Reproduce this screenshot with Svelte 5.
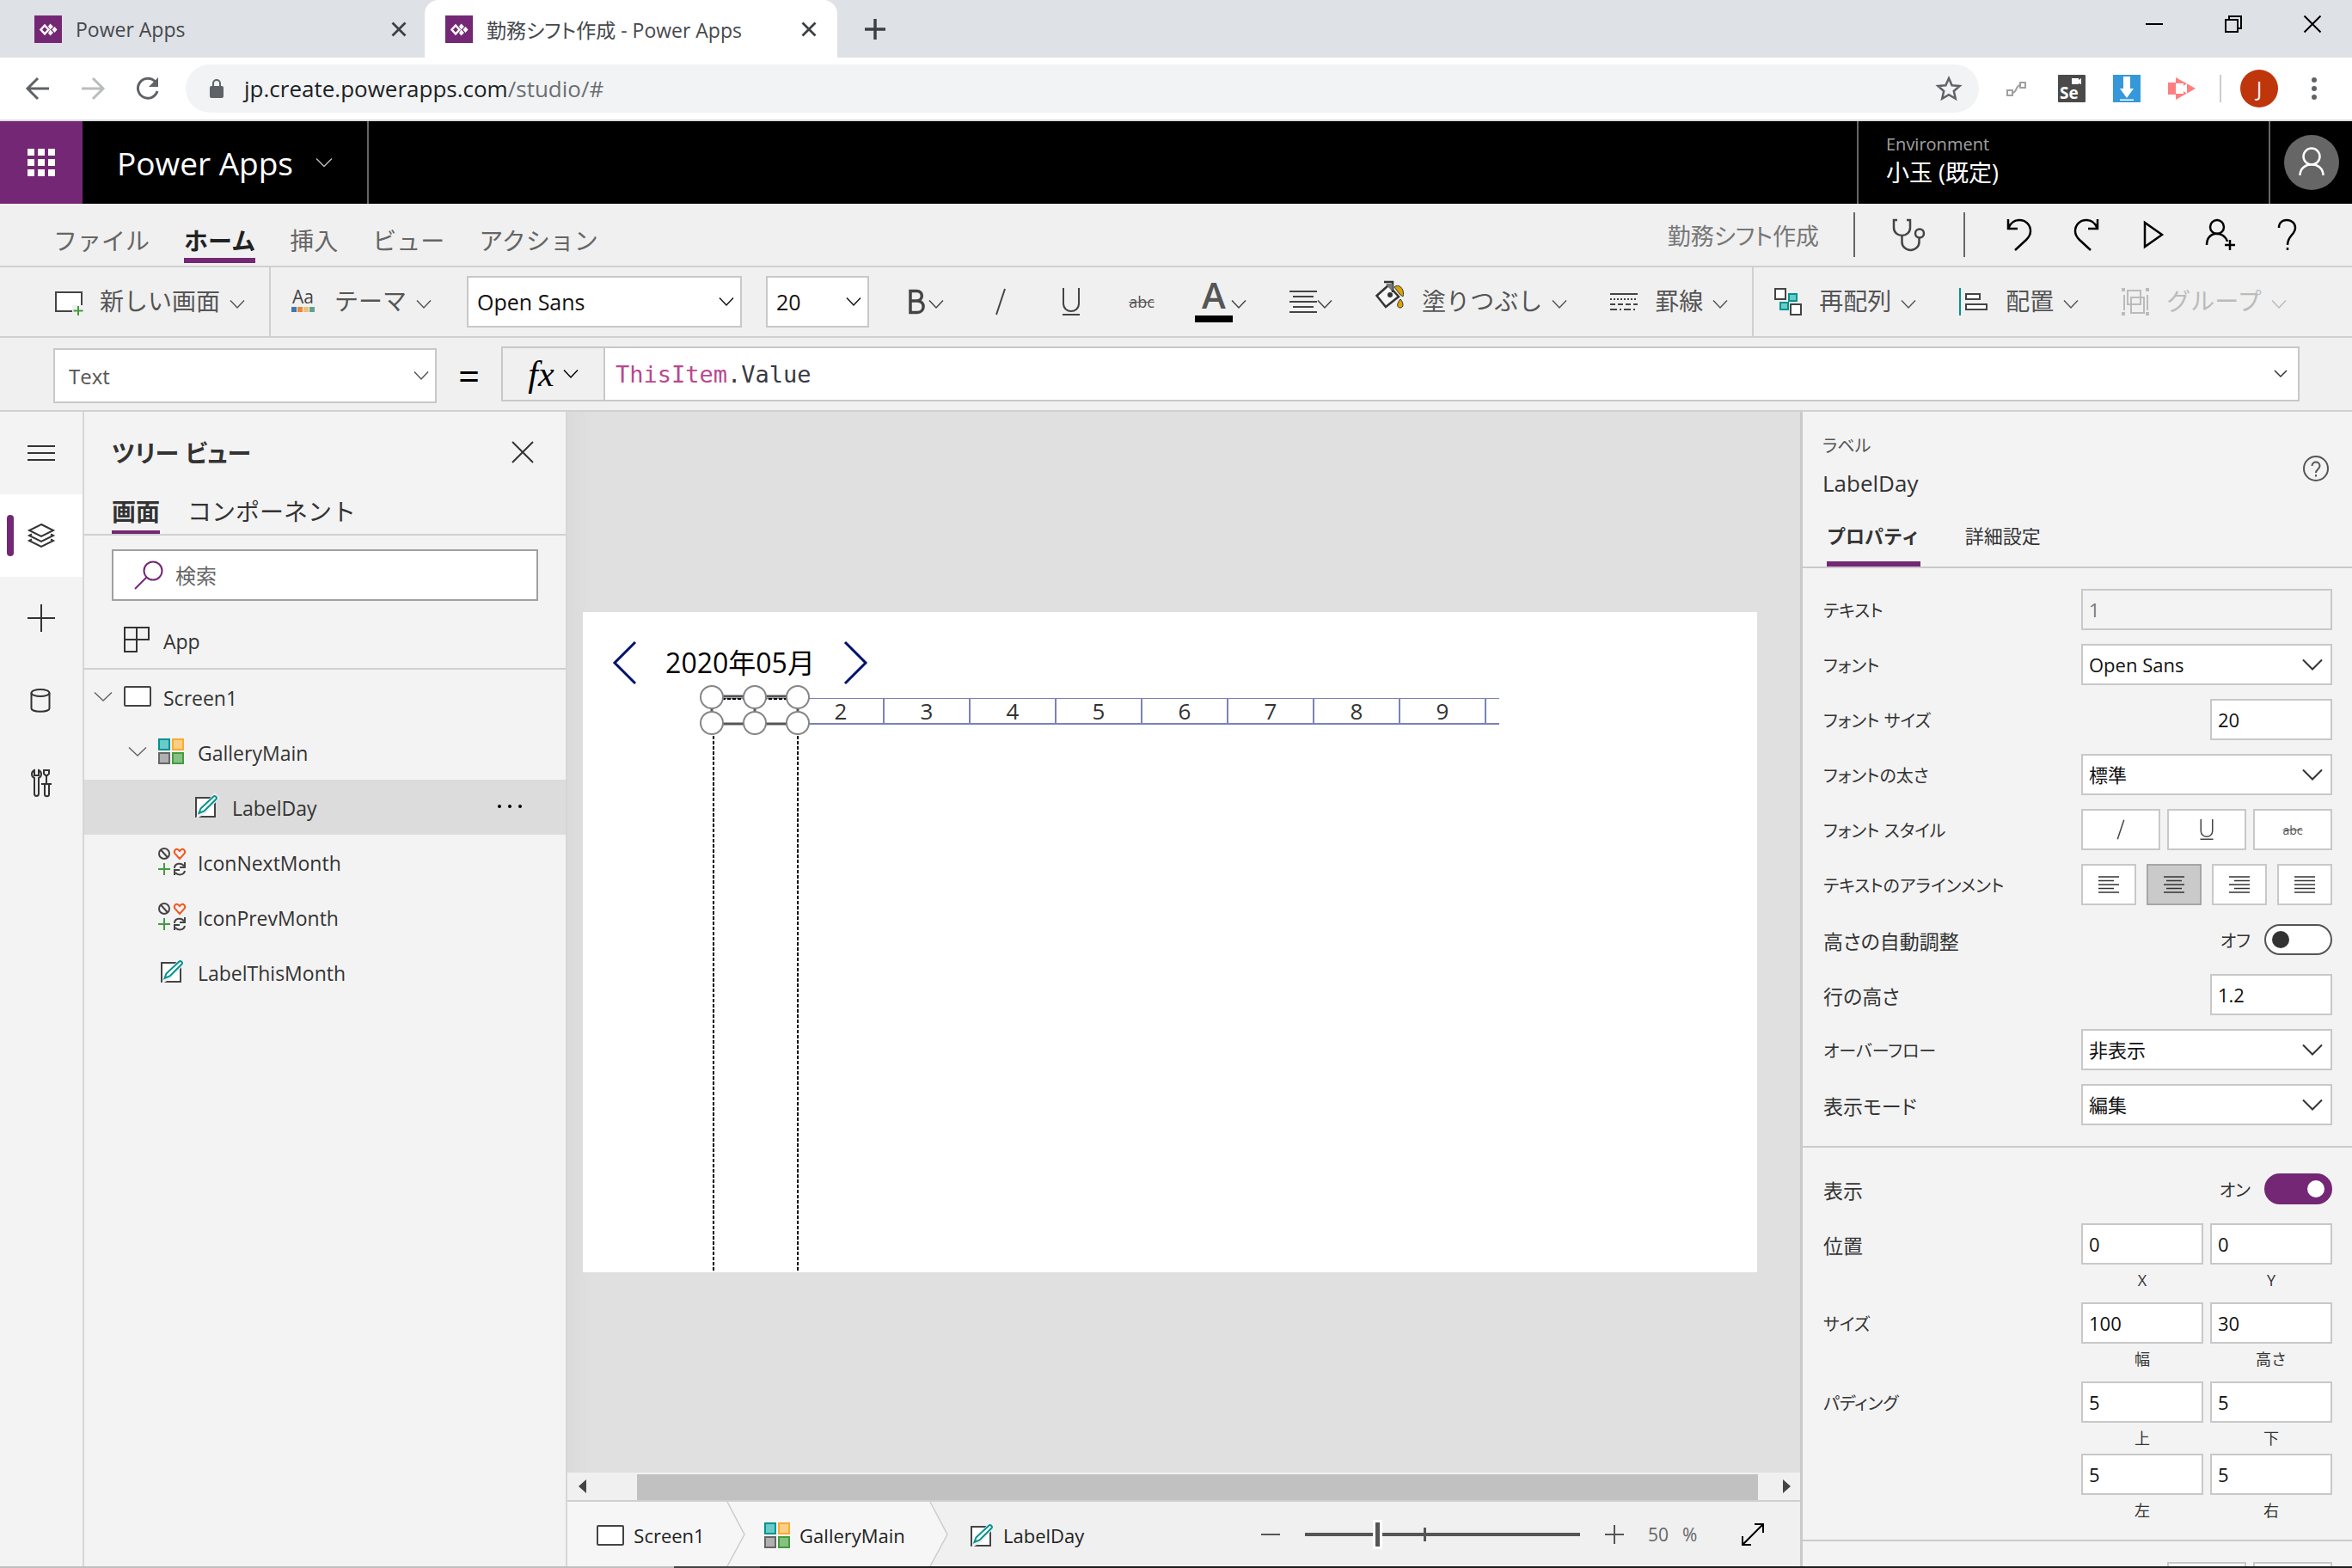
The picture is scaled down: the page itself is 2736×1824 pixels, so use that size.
<script>
  const menus = ['ファイル', 'ホーム', '挿入', 'ビュー', 'アクション'];
  const days = [1, 2, 3, 4, 5, 6, 7, 8, 9];
  const handles = [0, 50, 100];
  const treeItems = [
    { name: 'Screen1', icon: 'screen', level: 0, open: true },
    { name: 'GalleryMain', icon: 'gallery', level: 1, open: true },
    { name: 'LabelDay', icon: 'label', level: 2, selected: true },
    { name: 'IconNextMonth', icon: 'icons', level: 1 },
    { name: 'IconPrevMonth', icon: 'icons', level: 1 },
    { name: 'LabelThisMonth', icon: 'label', level: 1 }
  ];
  const aligns = [
    { name: '左揃え', rows: [[0, 24], [0, 18], [0, 24], [0, 18], [0, 24]] },
    { name: '中央揃え', rows: [[0, 24], [3, 21], [0, 24], [3, 21], [0, 24]], on: true },
    { name: '右揃え', rows: [[0, 24], [6, 24], [0, 24], [6, 24], [0, 24]] },
    { name: '両端揃え', rows: [[0, 24], [0, 24], [0, 24], [0, 24], [0, 24]] }
  ];
</script>

{#snippet chevron()}
  <svg class="chev" width="18" height="12" viewBox="0 0 18 12"><path d="M1 1.500l8 8.500 8-8.500" /></svg>
{/snippet}

{#snippet bigChevron()}
  <svg class="chev big" width="24" height="15" viewBox="0 0 24 15"><path d="M1 1.500l11 11 11-11" /></svg>
{/snippet}

{#snippet favicon()}
  <svg width="32" height="32" viewBox="0 0 32 32">
    <rect width="32" height="32" fill="#742774" />
    <path d="M12 11.500l4.500 5-4.500 5-4.500-5z" fill="none" stroke="#fff" stroke-width="2.500" />
    <path d="M18.500 9.500l3.500 3.500-3.500 3.500-2.500-4zM18.500 16.500l3.500 3.500-3.500 3.500-2.500-3zM23.500 13l3 3.500-3 3.500-3-3.500z" fill="#fff" />
  </svg>
{/snippet}

{#snippet tabClose()}
  <svg width="18" height="18" viewBox="0 0 18 18"><path d="M1.500 1.500l15 15M16.500 1.500l-15 15" stroke="#3c4043" stroke-width="2.800" /></svg>
{/snippet}

{#snippet screenIcon()}
  <svg width="32" height="24" viewBox="0 0 32 24"><rect x="1" y="1" width="30" height="22" rx="1" fill="#fff" stroke="#444" stroke-width="2" /></svg>
{/snippet}

{#snippet galleryIcon()}
  <svg width="30" height="30" viewBox="0 0 30 30" stroke-width="2">
    <rect x="1" y="1" width="12" height="12" fill="#69cccb" stroke="#009390" />
    <rect x="17" y="1" width="12" height="12" fill="#fccf84" stroke="#fbaa33" />
    <rect x="1" y="17" width="12" height="12" fill="#b0b0b0" stroke="#666" />
    <rect x="17" y="17" width="12" height="12" fill="#86c184" stroke="#429c3e" />
  </svg>
{/snippet}

{#snippet labelIcon()}
  <svg width="28" height="28" viewBox="0 0 28 28">
    <rect x="2" y="4" width="22" height="22" fill="#fff" stroke="#444" stroke-width="2" />
    <path d="M24 .500l3.500 3.500-15 17-8 4.500 2-7z" fill="#f0f0f0" stroke="#f0f0f0" stroke-width="3" />
    <path d="M22.500 2.500c1.500-1.500 4.500 1 3 3L11.500 19.500 5.500 22l2-5.500z" fill="#fff" stroke="#009390" stroke-width="2" />
  </svg>
{/snippet}

{#snippet iconsIcon()}
  <svg width="32" height="32" viewBox="0 0 32 32" fill="none" stroke-width="2">
    <circle cx="7" cy="7" r="6" stroke="#444" /><path d="M3 2.500l8 9" stroke="#444" />
    <path d="M25 13l-5.500-6c-2-3 1-6.500 4-4.500l1.500 1.500 1.500-1.500c3-2 6 1.500 4 4.500z" stroke="#f2571f" />
    <path d="M7 18v14M0 25h14" stroke="#429c3e" />
    <path d="M19 24c0-6 8-7 11-2.500M31 17v6h-6M31 27c-1 5-8 6-11 2M19 32v-6h6" stroke="#444" />
  </svg>
{/snippet}

{#snippet objectIcon(kind)}
  {#if kind === 'screen'}{@render screenIcon()}
  {:else if kind === 'gallery'}{@render galleryIcon()}
  {:else if kind === 'label'}{@render labelIcon()}
  {:else}{@render iconsIcon()}{/if}
{/snippet}

{#snippet italicIcon()}
  <svg width="32" height="32" viewBox="0 0 32 32"><path d="M21 1L11 31" stroke="#444" stroke-width="2" /></svg>
{/snippet}

{#snippet underlineIcon()}
  <svg width="32" height="32" viewBox="0 0 32 32" fill="none" stroke="#444" stroke-width="2"><path d="M7 0v18c0 12 18 12 18 0V0M6 31h20" /></svg>
{/snippet}

{#snippet numberField(id, value, label)}
  <span class="num">
    <input {id} type="text" {value} />
    <label for={id}>{label}</label>
  </span>
{/snippet}

{#snippet selectRow(id, label, value, kana)}
  <div class="prop">
    <label for={id} class:kana>{label}</label>
    <span class="select wide"><select {id}><option>{value}</option></select>{@render bigChevron()}</span>
  </div>
{/snippet}

<div class="window">
  <header class="tabstrip">
    <div class="btab">{@render favicon()}<span>Power Apps</span><button aria-label="閉じる">{@render tabClose()}</button></div>
    <div class="btab active">{@render favicon()}<span>勤務シフト作成 - Power Apps</span><button aria-label="閉じる">{@render tabClose()}</button></div>
    <button class="newtab" aria-label="新しいタブ"><svg width="26" height="26" viewBox="0 0 26 26"><path d="M13 1v24M1 13h24" stroke="#3c4043" stroke-width="3.500" /></svg></button>
    <div class="winbtns">
      <button aria-label="最小化"><svg width="20" height="20" viewBox="0 0 20 20"><path d="M0 10h20" /></svg></button>
      <button aria-label="元に戻す"><svg width="20" height="20" viewBox="0 0 20 20"><path d="M1 5h14v14H1zM5 5V1h14v14h-4" /></svg></button>
      <button aria-label="ウィンドウを閉じる"><svg width="20" height="20" viewBox="0 0 20 20"><path d="M.500 .500l19 19M19.500 .500l-19 19" /></svg></button>
    </div>
  </header>

  <div class="address">
    <nav class="navbtns">
      <button aria-label="戻る"><svg width="28" height="28" viewBox="0 0 28 28"><path d="M27 14H2.500M14 2L2 14l12 12" stroke="#5f6368" /></svg></button>
      <button aria-label="進む"><svg width="28" height="28" viewBox="0 0 28 28"><path d="M1 14h24.500M14 2l12 12-12 12" stroke="#babcbe" /></svg></button>
      <button aria-label="再読み込み"><svg width="28" height="28" viewBox="0 0 28 28"><path d="M22.500 6A11.500 11.500 0 1 0 25 17" stroke="#5f6368" /><path d="M26 1v11H15z" fill="#5f6368" stroke="none" /></svg></button>
    </nav>
    <div class="omnibox">
      <svg width="16" height="22" viewBox="0 0 16 22"><rect y="8" width="16" height="14" rx="2" fill="#5f6368" /><path d="M4 9V5a4 4 0 0 1 8 0v4" fill="none" stroke="#5f6368" stroke-width="2" /></svg>
      <span class="url">jp.create.powerapps.com<i>/studio/#</i></span>
      <button aria-label="ブックマーク"><svg width="30" height="30" viewBox="0 0 30 30"><path d="M15 3l3.600 8.200 9 .800-6.800 6 2 8.800L15 22.200l-7.800 4.600 2-8.800-6.800-6 9-.800z" fill="none" stroke="#5f6368" stroke-width="2.500" /></svg></button>
    </div>
    <div class="extensions">
      <svg width="32" height="32" viewBox="0 0 32 32" fill="none" stroke="#a0a0a0" stroke-width="2"><rect x="5" y="18" width="6" height="6" /><rect x="20" y="9" width="6" height="6" /><path d="M11 21c5 0 4-9 9-9" /></svg>
      <svg width="32" height="32" viewBox="0 0 32 32"><rect width="32" height="32" rx="1" fill="#4a4a4a" /><path d="M16 4h8v2l3-2v7l-3-1v1h-8z" fill="#fff" /><text x="2" y="28" font-size="19" font-weight="700" fill="#fff">Se</text></svg>
      <svg width="32" height="32" viewBox="0 0 32 32"><rect width="32" height="32" fill="#3498db" /><path d="M12 2h8v14h4l-8 11-8-11h4zM8 28.500h16v1.500H8z" fill="#fff" /></svg>
      <svg width="32" height="32" viewBox="0 0 32 32"><path d="M0 9h9V3l23 13L9 29v-6H0z" fill="#ff7f80" /><path d="M9 10h9v3l4-3v12l-4-3v3H9z" fill="#fff" /></svg>
    </div>
    <span class="vline"></span>
    <button class="profile">J</button>
    <button class="kebab" aria-label="メニュー"><svg width="8" height="28" viewBox="0 0 8 28" fill="#5f6368"><circle cx="4" cy="4" r="3" /><circle cx="4" cy="14" r="3" /><circle cx="4" cy="24" r="3" /></svg></button>
  </div>

  <div class="suite">
    <button class="waffle" aria-label="アプリ起動ツール"><svg width="32" height="32" viewBox="0 0 32 32" fill="#fff">
      {#each [0, 12, 24] as y}{#each [0, 12, 24] as x}<rect {x} {y} width="8" height="8" />{/each}{/each}
    </svg></button>
    <button class="brand">Power Apps <svg width="20" height="12" viewBox="0 0 20 12"><path d="M1 1.500l9 9 9-9" fill="none" stroke="#bbb" stroke-width="1.500" /></svg></button>
    <div class="env"><small>Environment</small><span>小玉 (既定)</span></div>
    <button class="me" aria-label="アカウント"><svg width="64" height="64" viewBox="0 0 64 64"><circle cx="32" cy="32" r="32" fill="#666" /><g fill="none" stroke="#fff" stroke-width="2.500"><circle cx="32" cy="25" r="9.500" /><path d="M18.500 47c0-17 27-17 27 0" /></g></svg></button>
  </div>

  <div class="menubar">
    <nav>
      {#each menus as m}<button class:current={m === 'ホーム'}>{m}</button>{/each}
    </nav>
    <div class="appname">勤務シフト作成</div>
    <span class="bar"></span>
    <button class="checker" aria-label="アプリ チェッカー"><svg width="40" height="38" viewBox="0 0 40 38" stroke="#444"><path d="M6 2H2v9a9.500 9 0 0 0 19 0V2h-4M11.500 20v7.500a10 9.500 0 0 0 20 0V23" /><circle cx="32" cy="17.500" r="5" /></svg></button>
    <span class="bar"></span>
    <div class="actions">
      <button aria-label="元に戻す"><svg width="38" height="38" viewBox="0 0 38 38"><path d="M6 1v11h11M6 12C9 4 14 2 19 2c8 0 13 6 13 13 0 4-2 7-5 10L14 37" /></svg></button>
      <button aria-label="やり直し"><svg width="38" height="38" viewBox="0 0 38 38"><path d="M32 1v11H21M32 12C29 4 24 2 19 2 11 2 6 8 6 15c0 4 2 7 5 10l13 12" /></svg></button>
      <button aria-label="プレビュー"><svg width="38" height="38" viewBox="0 0 38 38"><path d="M9 5v28l20-14z" /></svg></button>
      <button aria-label="共有"><svg width="38" height="38" viewBox="0 0 38 38"><circle cx="15" cy="10" r="8" /><path d="M3 31c0-17 20-17 24-4M30 25v12M24 31h12" /></svg></button>
      <button aria-label="ヘルプ"><svg width="38" height="38" viewBox="0 0 38 38"><path d="M9 11C9 4 14 2 18 2c6 0 10 4 10 9 0 8-9 9-9 20M19 34v3" /></svg></button>
    </div>
  </div>

  <div class="toolbar">
    <div class="group first">
      <button class="tool">
        <svg width="32" height="32" viewBox="0 0 32 32"><rect x="1" y="5" width="30" height="22" fill="#fff" stroke="#444" stroke-width="2" /><path d="M20 20h12v12H20z" fill="#f0f0f0" /><path d="M27 21v11M21.500 26.500h11" stroke="#429c3e" stroke-width="2" /></svg>
        <span>新しい画面</span>{@render chevron()}
      </button>
    </div>
    <div class="group second">
      <button class="tool">
        <svg width="30" height="32" viewBox="0 0 30 32"><text x="1" y="18" font-size="21" fill="#444">Aa</text><rect y="22" width="6" height="6" fill="#4178b0" /><rect x="7" y="22" width="6" height="6" fill="#e8883a" /><rect x="14" y="22" width="6" height="6" fill="#ecc07a" /><rect x="21" y="22" width="6" height="6" fill="#61a38a" /></svg>
        <span>テーマ</span>{@render chevron()}
      </button>
      <div class="fonts">
        <span class="select font"><select aria-label="フォント"><option>Open Sans</option></select>{@render chevron()}</span>
        <span class="select size"><select aria-label="フォント サイズ"><option>20</option></select>{@render chevron()}</span>
      </div>
      <button class="icon" aria-label="太さ"><svg width="24" height="32" viewBox="0 0 24 32" fill="none" stroke="#444" stroke-width="3.500"><path d="M3 3.500h7c9 0 8 11.500 0 11.500H3zM3 15h8c10 0 9 13.500 0 13.500H3z" /></svg>{@render chevron()}</button>
      <button class="icon" aria-label="斜体">{@render italicIcon()}</button>
      <button class="icon" aria-label="下線">{@render underlineIcon()}</button>
      <button class="icon abc">abc</button>
      <button class="icon" aria-label="色"><svg width="38" height="50" viewBox="0 0 38 50"><text x="18" y="33" font-size="42" font-weight="600" text-anchor="middle" fill="#555">A</text><rect x="-4" y="41" width="44" height="8" fill="#000" /></svg>{@render chevron()}</button>
      <button class="icon" aria-label="配置"><svg width="32" height="28" viewBox="0 0 32 28" stroke="#444" stroke-width="2"><path d="M0 2h32M4 8h24M0 14h32M4 20h24M0 26h32" /></svg>{@render chevron()}</button>
      <button class="tool fill">
        <svg class="raise" width="34" height="32" viewBox="0 0 34 32"><path d="M23 6c7-3 11 6 9 12l-4-3-6-8z" fill="#d9a404" stroke="#333" /><path d="M29 21c4 4 4 10 0 10s-5-4 0-10z" fill="#d9a404" stroke="#333" /><path d="M15 5L1.500 17 12 30l15-12z" fill="#f6f6f6" stroke="#333" stroke-width="2.500" /><path d="M10 1h10v12" fill="none" stroke="#333" stroke-width="2.500" /><path d="M12 3h8v8l-5-4z" fill="#777" /><circle cx="17" cy="16" r="3" fill="#333" /></svg>
        <span>塗りつぶし</span>{@render chevron()}
      </button>
      <button class="tool">
        <svg width="32" height="24" viewBox="0 0 32 24" stroke="#444" stroke-width="2"><path d="M0 3h32" /><path d="M0 9h32" stroke-dasharray="2" /><path d="M0 15h32" stroke-dasharray="6 3" /><path d="M0 21h32" stroke-dasharray="8 3 2 3" /></svg>
        <span>罫線</span>{@render chevron()}
      </button>
    </div>
    <div class="group third">
      <button class="tool">
        <svg width="32" height="32" viewBox="0 0 32 32" stroke-width="2"><rect x="17" y="7" width="9" height="8" fill="#69cccb" stroke="#009390" /><rect x="7" y="17" width="9" height="8" fill="#69cccb" stroke="#009390" /><rect x="1" y="1" width="12" height="12" fill="#fff" stroke="#444" /><rect x="19" y="19" width="12" height="12" fill="#fff" stroke="#444" /></svg>
        <span>再配列</span>{@render chevron()}
      </button>
      <button class="tool">
        <svg width="34" height="32" viewBox="0 0 34 32" stroke-width="2"><path d="M1 0v32" stroke="#009390" /><rect x="8" y="7" width="16" height="6" fill="#fff" stroke="#444" /><rect x="8" y="19" width="24" height="6" fill="#fff" stroke="#444" /></svg>
        <span>配置</span>{@render chevron()}
      </button>
      <button class="tool off" disabled>
        <svg width="32" height="32" viewBox="0 0 32 32" fill="none" stroke="#bbb" stroke-width="2"><path d="M7 3h15v16H7zM11 11h15v18H11zM3 8v18M30 8v18" /><path d="M0 2h4M28 2h4M0 30h4M28 30h4" stroke-width="4" /></svg>
        <span>グループ</span>{@render chevron()}
      </button>
    </div>
  </div>

  <div class="formula">
    <span class="select prop-name"><select aria-label="プロパティ"><option>Text</option></select>{@render chevron()}</span>
    <span class="eq">=</span>
    <div class="fxbox">
      <button class="fx"><em>fx</em>{@render chevron()}</button>
      <div class="code" role="textbox" tabindex="0" aria-label="数式"><span>ThisItem</span>.Value</div>
      <button class="expand" aria-label="展開"><svg class="chev" width="16" height="10" viewBox="0 0 16 10"><path d="M1 1l7 7 7-7" /></svg></button>
    </div>
  </div>

  <div class="body">
    <nav class="rail">
      <button aria-label="メニュー"><svg width="32" height="32" viewBox="0 0 32 32"><path d="M0 8h32M0 16h32M0 24h32" /></svg></button>
      <button class="on" aria-label="ツリー ビュー"><svg width="32" height="32" viewBox="0 0 32 32"><path d="M16 3l14 7-14 7-14-7zM5 14.500L2 16l14 7 14-7-3-1.500M5 20.500L2 22l14 7 14-7-3-1.500" /></svg></button>
      <button aria-label="挿入"><svg width="32" height="32" viewBox="0 0 32 32"><path d="M16 0v32M0 16h32" /></svg></button>
      <button aria-label="データ"><svg width="32" height="32" viewBox="0 0 32 32"><ellipse cx="15" cy="7" rx="10.500" ry="4" /><path d="M4.500 7v18c0 5 21 5 21 0V7" /></svg></button>
      <button aria-label="詳細ツール"><svg width="32" height="32" viewBox="0 0 32 32"><path d="M8 1C4 3 4 8 8 10v18c0 4 5 4 5 0V10c4-2 4-7 0-9v6H8zM19 1h6v4l-2 2h-2l-2-2zM22 7v10M16 17h12M20 18v11c0 3 5 3 5 0V18" /></svg></button>
    </nav>

    <aside class="tree">
      <div class="tree-title"><h2>ツリー ビュー</h2><button aria-label="閉じる"><svg width="26" height="26" viewBox="0 0 26 26"><path d="M1 1l24 24M25 1L1 25" stroke="#333" stroke-width="2" /></svg></button></div>
      <div class="tree-tabs"><button class="current">画面</button><button>コンポーネント</button></div>
      <div class="search">
        <svg width="34" height="34" viewBox="0 0 34 34" fill="none" stroke="#742774" stroke-width="2"><circle cx="22" cy="12" r="10.500" /><path d="M14.500 19.500L1 33" /></svg>
        <input type="search" placeholder="検索" aria-label="検索" />
      </div>
      <button class="app-row"><svg width="30" height="30" viewBox="0 0 30 30" fill="none" stroke="#333" stroke-width="2"><path d="M1 1h28v14H1zM15 1v28H1V15" /></svg><span>App</span></button>
      <ul>
        {#each treeItems as t}
          <li class="level{t.level}" class:selected={t.selected}>
            <span class="twist">{#if t.open}<svg width="22" height="13" viewBox="0 0 22 13"><path d="M1 1.500l10 9.500 10-9.500" /></svg>{/if}</span>
            <span class="glyph" class:inset={t.icon === 'label'}>{@render objectIcon(t.icon)}</span>
            <span class="name">{t.name}</span>
            {#if t.selected}<button aria-label="その他"><svg width="30" height="6" viewBox="0 0 30 6"><circle cx="3" cy="3" r="2" /><circle cx="15" cy="3" r="2" /><circle cx="27" cy="3" r="2" /></svg></button>{/if}
          </li>
        {/each}
      </ul>
    </aside>

    <main>
      <div class="stage">
        <div class="canvas">
          <div class="month">
            <svg width="28" height="50" viewBox="0 0 28 50"><path d="M26 1L2 25l24 24" /></svg>
            <span>2020年05月</span>
            <svg width="28" height="50" viewBox="0 0 28 50"><path d="M2 1l24 24L2 49" /></svg>
          </div>
          <div class="gallery">
            {#each days as d}<span>{d === 1 ? '' : d}</span>{/each}
          </div>
          <svg class="selection" width="130" height="684" viewBox="0 0 130 684">
            <path d="M15 14h100M15 46h100M15 14v32M65 14v32M115 14v32" stroke="#555" stroke-width="3" />
            <path d="M15 17h100" stroke="#000" stroke-width="2" stroke-dasharray="4 2" />
            <path d="M17 60v622M115 60v622" stroke="#000" stroke-width="2" stroke-dasharray="4 2" />
            {#each handles as h}
              <circle cx={15 + h} cy="15" r="13" /><circle cx={15 + h} cy="45" r="13" />
            {/each}
          </svg>
        </div>
      </div>
      <div class="hscroll">
        <svg width="10" height="16" viewBox="0 0 10 16"><path d="M9 0v16L0 8z" fill="#444" /></svg>
        <div class="thumb"></div>
        <svg width="10" height="16" viewBox="0 0 10 16"><path d="M1 0v16l9-8z" fill="#444" /></svg>
      </div>
      <footer>
        <button class="crumb c1">{@render screenIcon()}<span>Screen1</span></button>
        <svg class="tip" width="22" height="75" viewBox="0 0 22 75" preserveAspectRatio="none"><path d="M0 0h22v75H0z" fill="#f6f6f6" /><path d="M0 0l20 38L0 75" fill="none" stroke="#ccc" stroke-width="1.500" /></svg>
        <button class="crumb c2">{@render galleryIcon()}<span>GalleryMain</span></button>
        <svg class="tip" width="22" height="75" viewBox="0 0 22 75" preserveAspectRatio="none"><path d="M0 0l20 38L0 75z" fill="#f6f6f6" /><path d="M0 0l20 38L0 75" fill="none" stroke="#ccc" stroke-width="1.500" /></svg>
        <button class="crumb c3">{@render labelIcon()}<span>LabelDay</span></button>
        <div class="zoom">
          <button aria-label="縮小"><svg width="22" height="22" viewBox="0 0 22 22"><path d="M0 11h22" /></svg></button>
          <span class="slider"><input type="range" min="0" max="100" value="26" aria-label="ズーム" /><i></i></span>
          <button aria-label="拡大"><svg width="22" height="22" viewBox="0 0 22 22"><path d="M0 11h22M11 0v22" /></svg></button>
          <span class="pct"><span>50</span><span>%</span></span>
          <button aria-label="画面に合わせる"><svg class="fit" width="26" height="26" viewBox="0 0 26 26"><path d="M2 24L24 2M15 1h10v10M1 15v10h10" /></svg></button>
        </div>
      </footer>
    </main>

    <aside class="props">
      <div class="props-head">
        <div><p>ラベル</p><h3>LabelDay</h3></div>
        <button aria-label="ヘルプ"><svg width="30" height="30" viewBox="0 0 30 30" fill="none" stroke="#555" stroke-width="2"><circle cx="15" cy="15" r="14" /><path d="M10.500 12c0-6 9-6 9 0 0 4-4.500 4-4.500 8M15 22v2.500" /></svg></button>
      </div>
      <div class="props-tabs"><button class="current">プロパティ</button><button>詳細設定</button></div>
      <section>
        <div class="prop"><label class="kana" for="text">テキスト</label><input id="text" class="wide locked" type="text" value="1" readonly /></div>
        {@render selectRow('font', 'フォント', 'Open Sans', true)}
        <div class="prop"><label class="kana" for="size">フォント サイズ</label><input id="size" class="half" type="text" value="20" /></div>
        {@render selectRow('weight', 'フォントの太さ', '標準', true)}
        <div class="prop"><span class="lbl kana">フォント スタイル</span>
          <span class="styles">
            <button aria-label="斜体">{@render italicIcon()}</button><button aria-label="下線">{@render underlineIcon()}</button><button class="abc">abc</button>
          </span>
        </div>
        <div class="prop"><span class="lbl kana">テキストのアラインメント</span>
          <span class="aligns">
            {#each aligns as a}
              <button class:on={a.on} aria-label={a.name}><svg width="24" height="22" viewBox="0 0 24 22" stroke="#333" stroke-width="1.500">{#each a.rows as r, i}<path d="M{r[0]} {2 + i * 4.5}H{r[1]}" />{/each}</svg></button>
            {/each}
          </span>
        </div>
        <div class="prop"><label for="auto">高さの自動調整</label><span class="switch">オフ<input id="auto" type="checkbox" role="switch" /></span></div>
        <div class="prop"><label for="lh">行の高さ</label><input id="lh" class="half" type="text" value="1.2" /></div>
        {@render selectRow('overflow', 'オーバーフロー', '非表示', true)}
        {@render selectRow('mode', '表示モード', '編集', false)}
      </section>
      <section>
        <div class="prop"><label for="visible">表示</label><span class="switch">オン<input id="visible" type="checkbox" role="switch" checked /></span></div>
        <div class="prop"><span class="lbl">位置</span><span class="pairs">{@render numberField('x', '0', 'X')}{@render numberField('y', '0', 'Y')}</span></div>
        <div class="prop"><span class="lbl kana">サイズ</span><span class="pairs">{@render numberField('w', '100', '幅')}{@render numberField('h', '30', '高さ')}</span></div>
        <div class="prop"><span class="lbl kana">パディング</span><span class="pairs">{@render numberField('pt', '5', '上')}{@render numberField('pb', '5', '下')}{@render numberField('pl', '5', '左')}{@render numberField('pr', '5', '右')}</span></div>
      </section>
      <section>
        <div class="prop"><span class="styles"><button aria-label="色"></button><button aria-label="塗りつぶし"></button></span></div>
      </section>
    </aside>
  </div>
  <div class="taskbar"><i></i><i></i></div>
</div>

<style>
  :global(body) { overflow: hidden; }
  .window, button, input, select {
    font-family: "Open Sans", "Noto Sans CJK JP", sans-serif;
  }
  .window { display: flex; flex-direction: column; height: 100vh; color: #333; background: #f0f0f0; font-size: 22px; overflow: hidden; }
  .window * { box-sizing: border-box; }
  button { border: 0; background: none; padding: 0; margin: 0; color: inherit; font-size: inherit; display: flex; align-items: center; justify-content: center; white-space: nowrap; flex: none; }
  svg { flex: none; display: block; overflow: visible; }
  .chev path { fill: none; stroke: currentColor; stroke-width: 1.5; }
  .chev.big path { stroke-width: 2; }

  .tabstrip { display: flex; height: 67px; background: #dee1e6; flex: none; }
  .btab { display: flex; align-items: center; width: 480px; height: 67px; padding: 0 24px; font-size: 23px; color: #45494d; }
  .btab:first-child { width: 494px; padding: 0 21px 0 40px; }
  .btab span { flex: 1; margin-left: 16px; white-space: nowrap; font-feature-settings: "palt"; }
  .active { background: #fff; border-radius: 16px 16px 0 0; }
  .newtab { width: 88px; }
  .winbtns { margin-left: auto; display: flex; gap: 72px; padding: 0 36px; height: 56px; }
  .winbtns path { fill: none; stroke: #000; stroke-width: 2; }

  .address { display: flex; align-items: center; height: 74px; flex: none; background: #fff; border-bottom: 2px solid #dadce0; padding: 0 40px 0 30px; }
  .navbtns { display: flex; gap: 36px; margin-right: 30px; }
  .navbtns path { fill: none; stroke-width: 3; }
  .navbtns path[fill] { fill: #5f6368; }
  .omnibox { flex: 1; height: 56px; border-radius: 28px; background: #f1f3f4; display: flex; align-items: center; padding: 0 20px 0 28px; }
  .url { flex: 1; margin-left: 24px; font-size: 26px; color: #202124; }
  .url i { font-style: normal; color: #6b6f73; }
  .extensions { display: flex; gap: 32px; margin-left: 28px; }
  .vline { width: 2px; height: 32px; background: #ccc; margin: 0 22px 0 28px; }
  .profile { width: 44px; height: 44px; border-radius: 50%; background: #bf360c; color: #fff; font-size: 23px; margin-right: 38px; }

  .suite { display: flex; height: 96px; flex: none; background: #000; color: #fff; }
  .waffle { width: 96px; background: #742774; }
  .brand { width: 333px; border-right: 2px solid #666; font-size: 37px; gap: 26px; }
  .env { margin-left: auto; width: 479px; border-left: 2px solid #666; padding: 13px 0 0 32px; display: flex; flex-direction: column; }
  .env small { font-size: 20px; line-height: 28px; color: #a0a0a0; }
  .env span { font-size: 27px; line-height: 38px; }
  .me { width: 97px; border-left: 2px solid #666; }

  .menubar { display: flex; align-items: center; height: 74px; flex: none; border-bottom: 2px solid #d0d0d0; padding: 0 56px 0 62px; }
  .menubar nav { display: flex; gap: 40px; align-self: flex-end; margin: 0 auto 3px 0; }
  .menubar nav button { font-size: 28px; line-height: 40px; border-bottom: 6px solid transparent; color: #666; }
  .menubar nav .current { color: #222; font-weight: 700; border-color: #742774; }
  .appname { font-size: 27px; color: #777; font-feature-settings: "palt"; margin-right: 40px; }
  .bar { width: 2px; height: 52px; background: #666; }
  .checker { width: 126px; }
  .actions { display: flex; gap: 40px; margin-left: 44px; }
  .menubar svg { fill: none; stroke-width: 2.5; }
  .actions svg { stroke: #000; }

  .toolbar { display: flex; height: 82px; flex: none; border-bottom: 2px solid #d0d0d0; color: #444; }
  .group { display: flex; align-items: center; gap: 50px; }
  .first { padding: 0 28px 0 64px; border-right: 2px solid #d0d0d0; }
  .second { padding: 0 28px 0 24px; border-right: 2px solid #d0d0d0; }
  .third { padding-left: 24px; }
  .tool { font-size: 28px; line-height: 40px; color: #555; }
  .tool span { margin: 0 11px 0 20px; padding-bottom: 2px; }
  .off { color: #bbb; }
  .tool .chev, .icon .chev { margin-top: 6px; }
  .fonts { display: flex; gap: 28px; margin: 0 -5px 0 -9px; }
  .raise { margin-bottom: 16px; }
  .abc { width: 32px; font-size: 18px; text-decoration: line-through; color: #555; }

  .select { display: grid; grid-template-columns: 1fr auto; align-items: center; border: 2px solid #c8c8c8; background: #fff; color: #111; }
  .select select { grid-area: 1 / 1 / 2 / 3; width: 100%; height: 100%; appearance: none; border: 0; background: none; color: inherit; font-size: inherit; padding: 0 0 0 10px; }
  .select .chev { grid-area: 1 / 2; margin-right: 7px; pointer-events: none; }
  .font, .size { height: 60px; font-size: 25px; }
  .font { width: 320px; }
  .size { width: 120px; }

  .formula { display: flex; align-items: center; height: 86px; flex: none; border-bottom: 2px solid #d0d0d0; padding: 4px 61px 0 62px; }
  .prop-name { width: 446px; height: 64px; font-size: 24px; color: #555; }
  .prop-name select { padding-left: 16px; }
  .eq { width: 75px; text-align: center; font-size: 44px; line-height: 40px; color: #000; font-weight: 500; }
  .fxbox { flex: 1; height: 64px; margin-bottom: 4px; display: flex; border: 2px solid #c8c8c8; background: #fff; }
  .fx { width: 119px; background: #f0f0f0; border-right: 2px solid #c8c8c8; gap: 10px; color: #000; }
  .fx em { font: italic 42px/60px "Liberation Serif", serif; }
  .code { flex: 1; font: 27px/62px "DejaVu Sans Mono", monospace; padding-left: 12px; color: #383a42; }
  .code span { color: #b9478f; }
  .expand { width: 40px; }

  .body { flex: 1; min-height: 0; display: grid; grid-template-columns: 98px 562px minmax(0, 1fr) 642px; background: #f3f3f3; }
  .rail { border-right: 2px solid #d6d6d6; }
  .rail button { width: 96px; height: 96px; }
  .rail svg { fill: none; stroke: #333; stroke-width: 2; }
  .rail .on { background: #fff; justify-content: flex-start; }
  .rail .on::before { content: ""; width: 8px; height: 48px; border-radius: 4px; background: #742774; margin: 0 16px 0 8px; }

  .tree { border-right: 2px solid #d6d6d6; }
  .tree-title { display: flex; align-items: center; justify-content: space-between; height: 96px; padding: 0 37px 2px 32px; }
  h2 { margin: 0; font-size: 28px; font-weight: 600; font-feature-settings: "palt"; }
  .tree-tabs { display: flex; gap: 32px; height: 48px; padding-left: 32px; border-bottom: 2px solid #d0d0d0; font-size: 28px; }
  .tree-tabs button { line-height: 40px; padding-bottom: 2px; border-bottom: 4px solid transparent; }
  .tree-tabs .current { font-weight: 700; border-color: #742774; }
  .search { display: flex; align-items: center; gap: 14px; height: 60px; margin: 16px 32px 0; padding-left: 24px; border: 2px solid #a0a0a0; background: #fff; }
  .search input { flex: 1; border: 0; background: none; font-size: 24px; padding: 0; outline: 0; }
  .search input::placeholder { color: #666; opacity: 1; }
  .app-row { width: 100%; height: 80px; padding: 16px 0 0 46px; justify-content: flex-start; gap: 16px; border-bottom: 2px solid #d0d0d0; font-size: 23px; }
  .app-row svg { margin-bottom: 4px; }
  ul { list-style: none; margin: 0; padding: 0; font-size: 23px; }
  li { display: flex; align-items: center; height: 64px; padding: 0 50px 2px 11px; }
  .level1 { padding-left: 51px; }
  .level2 { padding-left: 91px; }
  .selected { background: #dcdcdc; }
  .twist { width: 35px; }
  .twist path { fill: none; stroke: #666; stroke-width: 1.5; }
  .glyph { width: 32px; margin-right: 14px; }
  .inset { padding-left: 2px; }
  .name { flex: 1; padding-top: 3px; }

  main { display: flex; flex-direction: column; min-width: 0; background: #f0f0f0; }
  .stage { flex: 1; min-height: 0; display: flex; align-items: center; padding-left: 18px; background: linear-gradient(90deg, #dadada, #e0e0e0 30px); overflow: hidden; }
  .canvas { position: relative; width: 1366px; height: 768px; flex: none; background: #fff; padding-top: 34px; }
  .month { display: flex; align-items: center; width: 331px; height: 50px; padding-left: 35px; justify-content: space-between; font-size: 32px; color: #000; line-height: 48px; }
  .month path { fill: none; stroke: #00126b; stroke-width: 3; }
  .gallery { display: flex; margin: 16px 0 0 151px; width: 915px; height: 31px; border-top: 1px solid #7a83b5; border-bottom: 2px solid #7a83b5; font-size: 26px; line-height: 28px; }
  .gallery span { width: 100px; flex: none; text-align: center; border-right: 2px solid #7a83b5; }
  .selection { position: absolute; left: 135px; top: 84px; fill: none; }
  .selection circle { fill: #fff; stroke: #868686; stroke-width: 2; }

  .hscroll { display: flex; align-items: center; height: 34px; flex: none; padding: 0 11px 0 13px; border-bottom: 2px solid #d0d0d0; }
  .thumb { flex: 1; height: 30px; margin: 2px 28px 0 58px; background: #c1c1c1; }
  footer { display: flex; height: 75px; flex: none; }
  .crumb { font-size: 22px; color: #222; gap: 11px; padding-top: 2px; background: #f6f6f6; }
  .tip { height: 100%; }
  .c1 { width: 186px; padding-left: 8px; }
  .c2 { width: 214px; padding-right: 8px; }
  .c3 { padding-left: 24px; background: none; }
  .zoom { margin-left: auto; display: flex; align-items: center; padding-right: 42px; }
  .zoom path { stroke: #555; stroke-width: 2; fill: none; }
  .zoom .fit path { stroke: #000; }
  .slider { position: relative; width: 320px; height: 40px; margin: 0 29px; }
  .slider i { position: absolute; left: 43%; top: 12px; width: 3px; height: 16px; background: #555; }
  .slider input { appearance: none; width: 100%; height: 40px; margin: 0; display: block; background: none; }
  .slider input::-webkit-slider-runnable-track { height: 4px; background: #555; }
  .slider input::-webkit-slider-thumb { appearance: none; width: 5px; height: 28px; margin-top: -12px; background: #555; box-shadow: 0 0 0 3px #fff; }
  .pct { display: flex; gap: 16px; width: 109px; margin-left: 28px; font-size: 21px; color: #666; }

  .props { border-left: 3px solid #cacaca; overflow: hidden; background: #f3f3f3; }
  .props-head { display: flex; justify-content: space-between; align-items: center; padding: 22px 27px 0 23px; }
  .props-head p { margin: 0; font-size: 20px; line-height: 36px; color: #555; font-feature-settings: "palt"; }
  h3 { margin: 0; font-size: 26px; font-weight: 400; line-height: 50px; padding-bottom: 2px; }
  .props-tabs { display: flex; gap: 52px; margin-top: 8px; padding-left: 28px; border-bottom: 2px solid #cacaca; }
  .props-tabs button { line-height: 52px; padding-bottom: 4px; border-bottom: 6px solid transparent; }
  .props-tabs .current { font-weight: 700; border-color: #742774; }
  section { padding: 16px 23px 16px 24px; border-bottom: 2px solid #cacaca; }
  section:last-child { border: 0; }
  .prop { display: flex; justify-content: space-between; min-height: 64px; padding-top: 8px; }
  .prop > label, .lbl { line-height: 52px; font-feature-settings: "palt"; font-size: 23px; }
  .prop > .kana { font-size: 20px; }
  .prop .styles:first-child { margin-left: auto; }
  .prop input[type="text"] { height: 48px; border: 2px solid #c8c8c8; background: #fff; font-size: 22px; color: #111; padding: 0 7px; border-radius: 0; }
  .wide { width: 292px; height: 48px; }
  .wide select { padding-left: 7px; }
  .prop .select .chev { margin-right: 9px; color: #333; }
  .half { width: 142px; }
  .prop input.locked { background: #f3f3f3; color: #777; }
  .styles { display: flex; gap: 8px; }
  .styles button { width: 92px; height: 48px; border: 2px solid #c8c8c8; background: #fff; }
  .styles svg { width: 24px; height: 24px; }
  .styles .abc { font-size: 14px; }
  .aligns { display: flex; gap: 12px; width: 292px; }
  .aligns button { width: 64px; height: 48px; border: 2px solid #c8c8c8; background: #fff; }
  .aligns .on { background: #cacaca; border-color: #a6a6a6; }
  .switch { display: flex; align-items: center; gap: 16px; height: 48px; font-feature-settings: "palt"; font-size: 20px; }
  .switch input { appearance: none; width: 79px; height: 36px; margin: 0; border: 2px solid #555; border-radius: 18px; background: #fff; display: flex; align-items: center; padding: 0 7px; }
  .switch input::before { content: ""; width: 20px; height: 20px; border-radius: 50%; background: #333; }
  .switch input:checked { background: #742774; border-color: #742774; justify-content: flex-end; }
  .switch input:checked::before { background: #fff; }
  .pairs { display: grid; grid-template-columns: 142px 142px; column-gap: 8px; }
  .num { display: flex; flex-direction: column; text-align: center; }
  .num label { font-size: 18px; line-height: 36px; }

  .taskbar { display: flex; height: 2px; flex: none; background: #1e1e22; }
  .taskbar i { width: 784px; background: #c0c0c0; }
  .taskbar i + i { width: 100px; background: #444; }
</style>
